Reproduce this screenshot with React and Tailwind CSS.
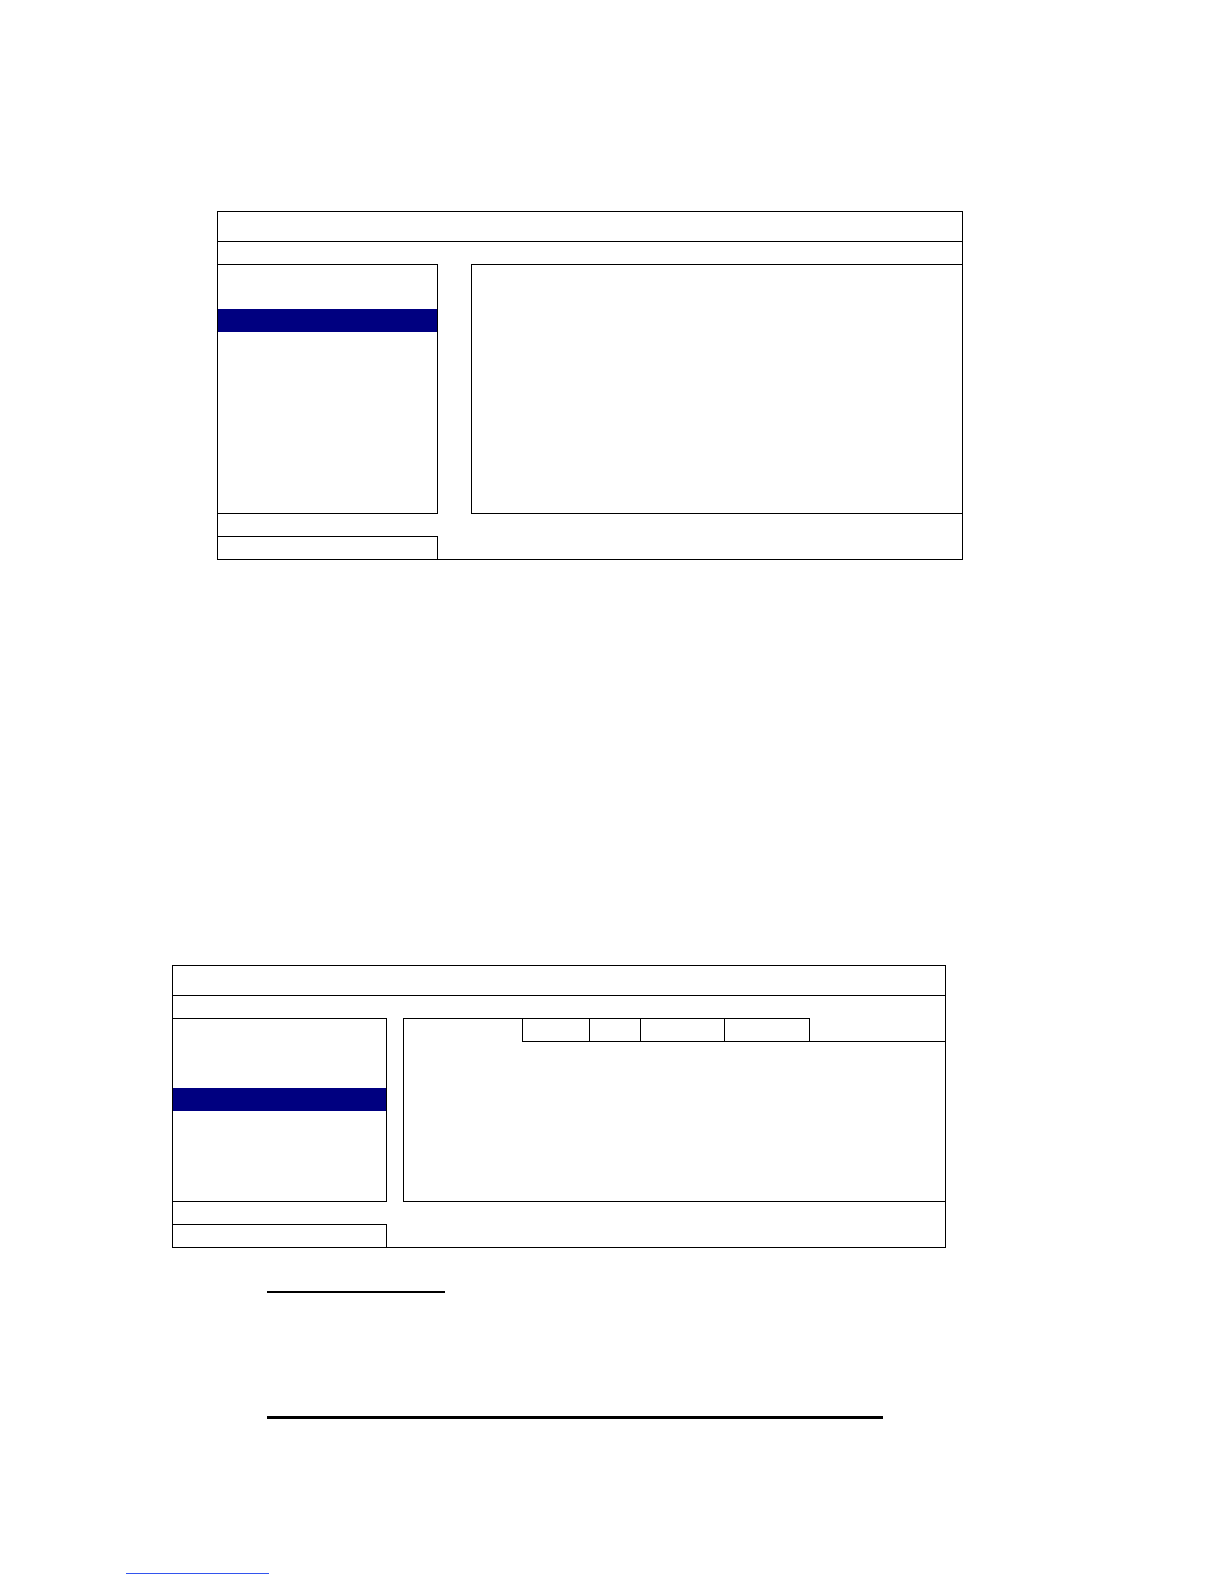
import React from "react";

// Menu dialog frame: title bar, sub bar, list + panel, footer.
function MenuFrame({ width, listWidth, gap, bodyHeight, selTop, tabs }) {
  return (
    <div className="border border-black bg-white" style={{ width }}>
      <div className="h-[30px] border-b border-black" />
      <div className="h-[22px]" />
      <div className="flex" style={{ height: bodyHeight }}>
        <div className="flex flex-col border-t border-r border-b border-black" style={{ width: listWidth }}>
          <div style={{ height: selTop }} />
          <div className="h-[23px] bg-[#000080]" />
        </div>
        <div style={{ width: gap }} />
        {tabs ? (
          <div className="flex flex-1 flex-col border-l border-b border-black">
            <div className="flex h-[24px]">
              <div className="w-[118px] border-t border-black" />
              {tabs.map((w, i) => (
                <div key={i} className="border-t border-l border-b border-black" style={{ width: w }} />
              ))}
              <div className="flex-1 border-l border-b border-black" />
            </div>
          </div>
        ) : (
          <div className="flex-1 border-t border-l border-b border-black" />
        )}
      </div>
      <div className="h-[22px]" />
      <div className="h-[23px] border-t border-r border-black" style={{ width: listWidth }} />
    </div>
  );
}

export default function App() {
  return (
    <div className="min-h-[1584px] bg-white font-['Liberation_Sans',sans-serif]">
      <div className="pt-[211px] pl-[217px]">
        <MenuFrame width={746} listWidth={220} gap={33} bodyHeight={250} selTop={44} />
      </div>
      <div className="pt-[405px] pl-[172px]">
        <MenuFrame width={774} listWidth={214} gap={16} bodyHeight={184} selTop={69} tabs={[67, 51, 84, 85]} />
      </div>
      <div className="pl-[267px] pt-[43px]">
        <div className="w-[178px] h-[2px] bg-black" />
        <div className="w-[616px] h-[3px] bg-black mt-[123px]" />
      </div>
      <div className="pl-[126px] pt-[154px]">
        <div className="w-[143px] h-px bg-[#3355ee]" />
      </div>
    </div>
  );
}
